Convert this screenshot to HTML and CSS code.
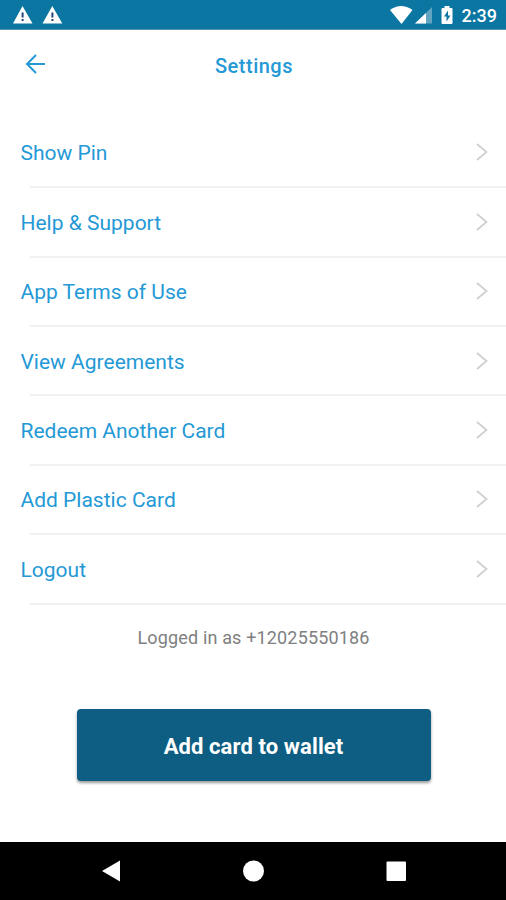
FILE: index.html
```html
<!DOCTYPE html>
<html lang="en">
<head>
<meta charset="utf-8">
<title>Settings</title>
<link rel="stylesheet" href="styles.css">
</head>
<body>
<div class="status">
  <svg class="warnings" width="54" height="20" viewBox="0 0 54 20"><path fill="#fff" d="M9.500 1 19.500 18.500H0ZM39.300 1 49.300 18.500H29.500Z"/><path fill="#254579" d="M8.600 7.500h2v5h-2ZM8.600 14h2v2h-2ZM38.400 7.500h2v5h-2ZM38.400 14h2v2h-2Z"/></svg>
  <svg class="signals" width="66" height="20" viewBox="0 0 66 20"><path fill="#fff" d="M0 5Q11-3 22.500 5L11.500 19Z"/><path fill="#fff" opacity=".35" d="M42 2v16.500H25Z"/><path fill="#fff" d="M36 8v10.500H25Z"/><path fill="#fff" fill-rule="evenodd" d="M54.500 1h5v2h2q1 0 1 1v14q0 1-1 1h-9q-1 0-1-1V4q0-1 1-1h2ZM58 5.500l-4 6h2.500v5l4-6H58Z"/></svg>
  <span class="time">2:39</span>
</div>
<header class="header">
  <svg class="back" width="22" height="22" viewBox="0 0 22 22"><path d="M21 11H3M12 2l-9 9 9 9"/></svg>
  <h1 class="title">Settings</h1>
</header>
<main class="main">
  <nav class="list">
    <a class="row"><span class="label">Show Pin</span><svg class="chevron" width="12" height="18" viewBox="0 0 12 18"><path d="m1 1 9.500 8L1 17"/></svg></a>
    <a class="row"><span class="label">Help &amp; Support</span><svg class="chevron" width="12" height="18" viewBox="0 0 12 18"><path d="m1 1 9.500 8L1 17"/></svg></a>
    <a class="row"><span class="label">App Terms of Use</span><svg class="chevron" width="12" height="18" viewBox="0 0 12 18"><path d="m1 1 9.500 8L1 17"/></svg></a>
    <a class="row"><span class="label">View Agreements</span><svg class="chevron" width="12" height="18" viewBox="0 0 12 18"><path d="m1 1 9.500 8L1 17"/></svg></a>
    <a class="row"><span class="label">Redeem Another Card</span><svg class="chevron" width="12" height="18" viewBox="0 0 12 18"><path d="m1 1 9.500 8L1 17"/></svg></a>
    <a class="row"><span class="label">Add Plastic Card</span><svg class="chevron" width="12" height="18" viewBox="0 0 12 18"><path d="m1 1 9.500 8L1 17"/></svg></a>
    <a class="row"><span class="label">Logout</span><svg class="chevron" width="12" height="18" viewBox="0 0 12 18"><path d="m1 1 9.500 8L1 17"/></svg></a>
  </nav>
  <p class="account">Logged in as +12025550186</p>
  <button class="wallet">Add card to wallet</button>
</main>
<footer class="navbar">
  <svg width="506" height="58" viewBox="0 0 506 58" fill="#fff"><path d="M102 29 120 18.500v21Z"/><circle cx="253.500" cy="29" r="10.500"/><rect x="386.500" y="19.500" width="19.500" height="19.500" rx="1"/></svg>
</footer>
</body>
</html>
```
FILE: styles.css
```css
* { box-sizing: border-box; }
body { margin: 0; height: 900px; display: flex; flex-direction: column; background: #fff; font-family: Roboto, sans-serif; overflow: hidden; }
.status { height: 30px; display: flex; align-items: center; padding: 0 9px 0 13px; background: #0b76a1; border-bottom: 1px solid #5593b4; color: #fff; flex: none; }
.signals { margin-left: auto; }
.time { margin-left: 6px; padding-top: 2px; font-size: 18px; font-weight: 500; line-height: 28px; }
.header { height: 71px; flex: none; display: grid; grid-template-columns: 46px 1fr 44px; align-items: center; }
.back { margin: -3px 0 0 23.500px; fill: none; stroke: #2499d6; stroke-width: 2; }
.title { margin: 0; text-align: center; font-size: 20px; font-weight: 500; letter-spacing: .5px; color: #2499d6; }
.main { flex: 1; display: flex; flex-direction: column; padding-top: 17.800px; }
.row { height: 69.4px; display: flex; align-items: center; justify-content: space-between; padding: 0 18px 0 20.500px; background: linear-gradient(#f1f1f1, #f1f1f1) 30px 100% / 100% 2px no-repeat; color: #2499d6; font-size: 21px; letter-spacing: 0; }
.label { padding-top: 0; }
.chevron { margin-top: -2px; fill: none; stroke: #d0d0d2; stroke-width: 1.8; }
.account { margin: 21px 0 0 1px; text-align: center; font-size: 18px; line-height: 24px; letter-spacing: .16px; color: #808080; }
.wallet { align-self: center; width: 354px; height: 72px; margin: 59.400px 0 0 1px; border: 0; border-radius: 4px; background: #0d5e82; color: #fff; font: 700 22px Roboto, sans-serif; letter-spacing: .1px; padding: 4px 0 0; box-shadow: 0 2px 3px rgba(0,0,0,.4); }
.navbar { height: 58px; flex: none; background: #000; }
.navbar svg { display: block; }
```
